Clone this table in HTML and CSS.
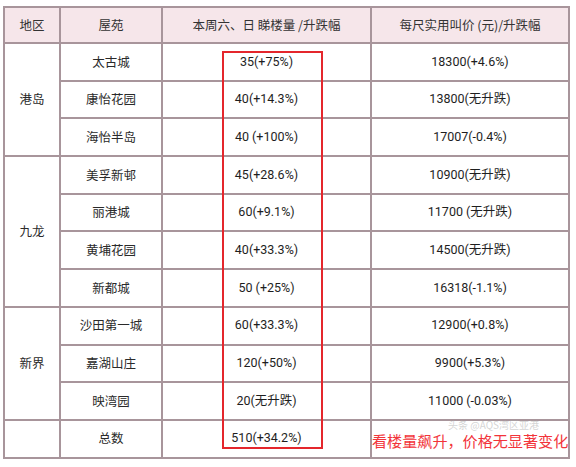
FILE: index.html
```html
<!DOCTYPE html>
<html lang="zh">
<head>
<meta charset="utf-8">
<link rel="stylesheet" href="styles.css">
</head>
<body>
<div class="wrap">
  <table class="grid">
    <thead>
      <tr>
        <th class="c1">地区</th>
        <th class="c2">屋苑</th>
        <th class="c3">本周六、日 睇楼量 /升跌幅</th>
        <th class="c4">每尺实用叫价 (元)/升跌幅</th>
      </tr>
    </thead>
    <tbody>
      <tr><td rowspan="3">港岛</td><td>太古城</td><td class="num">35(+75%)</td><td class="num">18300(+4.6%)</td></tr>
      <tr><td>康怡花园</td><td class="num">40(+14.3%)</td><td class="num">13800(无升跌)</td></tr>
      <tr><td>海怡半岛</td><td class="num">40 (+100%)</td><td class="num">17007(-0.4%)</td></tr>
      <tr><td rowspan="4">九龙</td><td>美孚新邨</td><td class="num">45(+28.6%)</td><td class="num">10900(无升跌)</td></tr>
      <tr><td>丽港城</td><td class="num">60(+9.1%)</td><td class="num">11700 (无升跌)</td></tr>
      <tr><td>黄埔花园</td><td class="num">40(+33.3%)</td><td class="num">14500(无升跌)</td></tr>
      <tr><td>新都城</td><td class="num">50 (+25%)</td><td class="num">16318(-1.1%)</td></tr>
      <tr><td rowspan="3">新界</td><td>沙田第一城</td><td class="num">60(+33.3%)</td><td class="num">12900(+0.8%)</td></tr>
      <tr><td>嘉湖山庄</td><td class="num">120(+50%)</td><td class="num">9900(+5.3%)</td></tr>
      <tr><td>映湾园</td><td class="num">20(无升跌)</td><td class="num">11000 (-0.03%)</td></tr>
      <tr><td></td><td>总数</td><td class="num">510(+34.2%)</td><td class="note">看楼量飙升，价格无显著变化</td></tr>
    </tbody>
  </table>
  <div class="highlight"></div>
  <div class="watermark">头条 @AQS湾区亚港</div>
</div>
</body>
</html>
```

FILE: styles.css
```css
html, body {
  margin: 0;
  padding: 0;
  background: #ffffff;
}
body {
  font-family: "Noto Sans CJK SC", "Noto Sans", sans-serif;
  color: #2a2a2a;
}
.wrap {
  position: relative;
  padding: 6px 0 0 3px;
  width: 573px;
}
.grid {
  border-collapse: separate;
  border-spacing: 0;
  table-layout: fixed;
  width: 567px;
  border-left: 2px solid #a8959b;
  border-top: 2px solid #a8959b;
}
.grid th, .grid td {
  box-sizing: border-box;
  border-right: 2px solid #a8959b;
  border-bottom: 2px solid #a8959b;
  text-align: center;
  vertical-align: middle;
  padding: 0;
  font-size: 12.5px;
  font-weight: 400;
  line-height: 1;
}
.grid th {
  background: #f6e6ea;
  height: 36px;
  color: #333;
}
.grid td {
  height: 37.7px;
}
.c1 { width: 56px; }
.c2 { width: 102px; }
.c3 { width: 209px; }
.c4 { width: 198px; }
.num {
  font-family: Roboto, "Noto Sans CJK SC", sans-serif;
  font-size: 12px;
  color: #1e1e1e;
}
.grid td.note {
  color: #f2343a;
  font-size: 15.1px;
  font-weight: 400;
  white-space: nowrap;
  text-align: left;
  padding-left: 0;
  padding-top: 3px;
}
.highlight {
  position: absolute;
  left: 222px;
  top: 51px;
  width: 101px;
  height: 398px;
  box-sizing: border-box;
  border: 2px solid #e4262c;
}
.watermark {
  position: absolute;
  left: 448px;
  top: 420px;
  font-size: 10px;
  line-height: 1;
  color: rgba(170, 170, 170, 0.5);
  white-space: nowrap;
}
```
